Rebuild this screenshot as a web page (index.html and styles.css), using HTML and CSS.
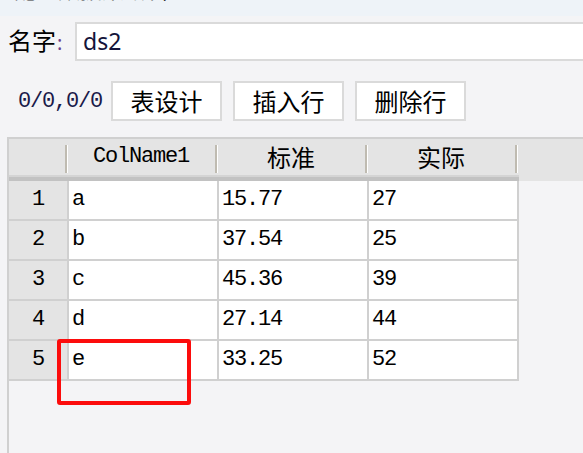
FILE: index.html
```html
<!DOCTYPE html>
<html>
<head>
	<title>数据集编辑</title>
	<meta charset="utf-8">
	<meta name="viewport" content="width=device-width, initial-scale=1">
	<link rel="stylesheet" href="styles.css">
</head>
<body>
	<div id="titleBar">
		<span id="titleText">配置数据集编辑</span>
	</div>
	<div id="nameRow">
		<label id="nameLabel">名字<span class="colon">:</span></label>
		<div id="nameInput">ds2</div>
	</div>
	<div id="toolbar">
		<span id="cursorPos">0/0,0/0</span>
		<button class="toolButton">表设计</button>
		<button class="toolButton">插入行</button>
		<button class="toolButton">删除行</button>
	</div>
	<div id="grid">
		<div id="gridHead">
			<div class="headRow">
				<div class="headCell rowNum"><span class="sep"></span></div>
				<div class="headCell"><span class="headLabel">ColName1</span><span class="sep"></span></div>
				<div class="headCell"><span class="headLabel cjk">标准</span><span class="sep"></span></div>
				<div class="headCell"><span class="headLabel cjk">实际</span><span class="sep"></span></div>
			</div>
			<div class="headBand"></div>
		</div>
		<div id="gridBody">
			<div class="row"><div class="cell rowNum">1</div><div class="cell">a</div><div class="cell">15.77</div><div class="cell">27</div></div>
			<div class="row"><div class="cell rowNum">2</div><div class="cell">b</div><div class="cell">37.54</div><div class="cell">25</div></div>
			<div class="row"><div class="cell rowNum">3</div><div class="cell">c</div><div class="cell">45.36</div><div class="cell">39</div></div>
			<div class="row"><div class="cell rowNum">4</div><div class="cell">d</div><div class="cell">27.14</div><div class="cell">44</div></div>
			<div class="row"><div class="cell rowNum">5</div><div class="cell">e</div><div class="cell">33.25</div><div class="cell">52</div></div>
		</div>
		<div id="highlight"></div>
	</div>
</body>
</html>
```

FILE: styles.css
```css
body {
	margin: 0;
	padding: 0;
	height: 453px;
	overflow: hidden;
	background: #f4f4f6;
	font-family: "Noto Sans CJK SC", sans-serif;
	color: #000;
	display: flex;
	flex-direction: column;
}

#titleBar {
	height: 16px;
	overflow: hidden;
	background: #eef3f8;
	padding-left: 14px;
}

#titleText {
	display: block;
	margin-top: -24px;
	font-size: 22px;
	line-height: 24px;
	color: #333;
}

#nameRow {
	display: flex;
	align-items: center;
	margin-top: 4px;
	padding-left: 8px;
}

#nameLabel {
	width: 67px;
	font-size: 24px;
	line-height: 39px;
}

.colon {
	color: #6b3f8c;
	font-family: "Noto Sans", sans-serif;
	font-size: 20px;
	margin-left: 1px;
}

#nameInput {
	flex: 1;
	margin-right: -20px;
	height: 35px;
	border: 2px solid #dadada;
	background: #fff;
	padding-left: 6px;
	font-family: "Noto Sans", sans-serif;
	font-size: 23px;
	line-height: 34px;
	color: #14143a;
}

#toolbar {
	display: flex;
	align-items: center;
	gap: 11px;
	margin-top: 19px;
	padding-left: 18px;
}

#cursorPos {
	font-family: "Liberation Mono", monospace;
	font-size: 22px;
	letter-spacing: -1.2px;
	color: #1a1a4a;
	margin-right: -2px;
}

.toolButton {
	width: 111px;
	height: 40px;
	margin: 0;
	padding: 0;
	border: 2px solid #dadada;
	background: #fff;
	font-family: "Noto Sans CJK SC", sans-serif;
	font-size: 24px;
	line-height: 34px;
	color: #000;
}

#grid {
	position: relative;
	flex: 1;
	margin-top: 16px;
	margin-left: 7px;
	border-left: 2px solid #d0d0d0;
	border-top: 2px solid #d0d0d0;
	font-family: "Liberation Mono", monospace;
	font-size: 22px;
	letter-spacing: -1.2px;
}

#gridHead {
	height: 42px;
	background: #e4e4e4;
}

.headRow {
	display: flex;
	height: 36px;
}

.headCell {
	display: flex;
	width: 150px;
}

.headCell.rowNum {
	width: 58px;
}

.headLabel {
	flex: 1;
	text-align: center;
	line-height: 36px;
}

.rowNum .sep {
	margin-left: auto;
}

.sep {
	width: 2px;
	margin: 6px 0 2px;
	background: #bfbbb1;
	box-shadow: 1px 0 0 #fff;
}

.cjk {
	font-family: "Noto Sans CJK SC", sans-serif;
	font-size: 24px;
	letter-spacing: 0;
}

.headBand {
	width: 510px;
	height: 6px;
	background: linear-gradient(#d4d4d4 0 2px, #c2c2c2 2px);
}

.row {
	display: flex;
	height: 40px;
}

.cell {
	box-sizing: border-box;
	width: 150px;
	padding-left: 3px;
	border-right: 2px solid #d0d0d0;
	border-bottom: 2px solid #d0d0d0;
	background: #fff;
	line-height: 38px;
}

.cell.rowNum {
	width: 60px;
	padding-left: 0;
	text-align: center;
	background: #e4e4e4;
}

#highlight {
	position: absolute;
	left: 48px;
	top: 200px;
	width: 126px;
	height: 58px;
	border: 4px solid #fc0c0c;
	border-radius: 3px;
}
```
